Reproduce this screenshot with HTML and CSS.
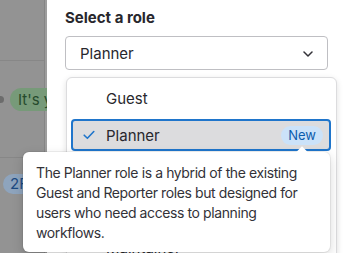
FILE: index.html
```html
<!DOCTYPE html>
<html lang="en">
<head>
    <meta charset="UTF-8">
    <meta name="viewport" content="width=device-width, initial-scale=1.0">
    <title>Select a role</title>
    <link rel="stylesheet" href="styles.css">
</head>
<body>
    <div class="page">
        <aside class="backdrop">
            <div class="backdrop-row first"></div>
            <div class="backdrop-row msg">
                <span class="avatar-dot"></span>
                <span class="pill green">It's yours</span>
            </div>
            <div class="backdrop-row token">
                <span class="pill blue">2FA</span>
            </div>
        </aside>

        <main class="drawer">
            <h2 class="field-label">Select a role</h2>
            <div class="select-wrap">
                <button class="select-box" aria-haspopup="listbox">
                    <span>Planner</span>
                    <svg class="chevron" width="10" height="6" viewBox="0 0 10 6" aria-hidden="true">
                        <path d="M1 1l4 4 4-4" fill="none" stroke="#333238" stroke-width="1.5" stroke-linecap="round" stroke-linejoin="round"/>
                    </svg>
                </button>

                <ul class="dropdown" role="listbox">
                    <li class="option">
                        <span class="check"></span>
                        <span>Guest</span>
                    </li>
                    <li class="option selected" aria-selected="true">
                        <span class="check">
                            <svg width="12" height="10" viewBox="0 0 12 10" aria-hidden="true">
                                <path d="M1.2 5.2l3.2 3.1L10.8 1.5" fill="none" stroke="#1f75cb" stroke-width="1.6" stroke-linecap="round" stroke-linejoin="round"/>
                            </svg>
                        </span>
                        <span>Planner</span>
                        <span class="badge">New</span>
                    </li>
                    <li class="option">
                        <span class="check"></span>
                        <span>Reporter</span>
                    </li>
                    <li class="option">
                        <span class="check"></span>
                        <span>Developer</span>
                    </li>
                    <li class="option last">
                        <span class="check"></span>
                        <span>Maintainer</span>
                    </li>
                </ul>

                <div class="tooltip" role="tooltip">
                    The Planner role is a hybrid of the existing Guest and Reporter roles but designed for users who need access to planning workflows.
                </div>
            </div>
        </main>
    </div>
</body>
</html>
```

FILE: styles.css
```css
/* Base */
body {
    margin: 0;
    font-family: 'Inter', 'Noto Sans', sans-serif;
    color: #3a383f;
    background: #ffffff;
}

.page {
    display: flex;
    width: 353px;
    height: 253px;
    overflow: hidden;
}

/* Dimmed page behind the drawer */
.backdrop {
    width: 44px;
    flex-shrink: 0;
    background: #939393;
    border-right: 1px solid #858585;
    margin-right: 2px;
    box-shadow: 2px 0 0 #9d9d9d;
}

.backdrop-row {
    border-bottom: 1px solid #878787;
    display: flex;
    align-items: center;
}

.backdrop-row.first {
    height: 60px;
}

.backdrop-row.msg {
    height: 97px;
    gap: 6px;
    margin-left: -3px;
    padding-bottom: 20px;
    box-sizing: border-box;
}

.backdrop-row.token {
    border-bottom: none;
    height: 60px;
    padding-left: 3px;
    padding-bottom: 8px;
    box-sizing: border-box;
}

.avatar-dot {
    width: 7px;
    height: 7px;
    border-radius: 50%;
    background: #6c6c6c;
    flex-shrink: 0;
}

.pill {
    flex-shrink: 0;
    border-radius: 12px;
    font-size: 15px;
    line-height: 23px;
    padding: 0 8px;
    white-space: nowrap;
}

.pill.green {
    background: #779a79;
    color: #264a2c;
}

.pill.blue {
    background: #8ea4bd;
    color: #1d4a82;
    line-height: 20px;
    padding: 0 7px;
}

/* Drawer */
.drawer {
    flex: 1;
    background: #ffffff;
    padding: 8px 25px 0 18px;
}

.field-label {
    margin: 0 0 8px;
    font-size: 15px;
    line-height: 20px;
    font-weight: 700;
    color: #28272d;
}

.select-wrap {
    position: relative;
}

.select-box {
    display: flex;
    justify-content: space-between;
    align-items: center;
    width: 100%;
    height: 34px;
    padding: 0 14px 0 14px;
    border: 1px solid #bfbfc3;
    border-radius: 4px;
    background: #ffffff;
    font-family: inherit;
    font-size: 15px;
    color: #28272d;
}

.chevron {
    margin-top: 1px;
}

/* Listbox */
.dropdown {
    position: absolute;
    top: 41px;
    left: 1px;
    width: 271px;
    box-sizing: border-box;
    margin: 0;
    padding: 4px 5px 0 4px;
    list-style: none;
    background: #ffffff;
    border: 1px solid #dcdcde;
    border-radius: 6px;
    box-shadow: 0 2px 6px rgba(5, 5, 6, 0.12);
}

.option {
    display: flex;
    align-items: center;
    box-sizing: border-box;
    height: 32px;
    padding: 0 6px 0 10px;
    margin-bottom: 5px;
    border: 2px solid transparent;
    border-radius: 4px;
    font-size: 15px;
    color: #28272d;
}

.option.selected {
    background: #dcdcde;
    border-color: #1f75cb;
}

.option.last {
    margin-top: 6px;
}

.check {
    width: 12px;
    margin-right: 11px;
    display: flex;
}

.badge {
    margin-left: auto;
    background: #cbe2f9;
    color: #0b5cad;
    font-size: 13px;
    line-height: 19px;
    padding: 0 7px;
    border-radius: 10px;
}

/* Tooltip over the list */
.tooltip {
    position: absolute;
    top: 116px;
    left: -42px;
    width: 307px;
    box-sizing: border-box;
    padding: 11px 14px 9px 13px;
    background: #ffffff;
    border-radius: 6px;
    box-shadow: 0 0 0 1px rgba(5, 5, 6, 0.06), 0 4px 12px rgba(5, 5, 6, 0.16);
    font-size: 14px;
    line-height: 20px;
    letter-spacing: -0.4px;
    color: #333238;
}

.tooltip::before {
    content: "";
    position: absolute;
    top: -4px;
    right: 24px;
    width: 8px;
    height: 8px;
    background: #ffffff;
    transform: rotate(45deg);
}
```
